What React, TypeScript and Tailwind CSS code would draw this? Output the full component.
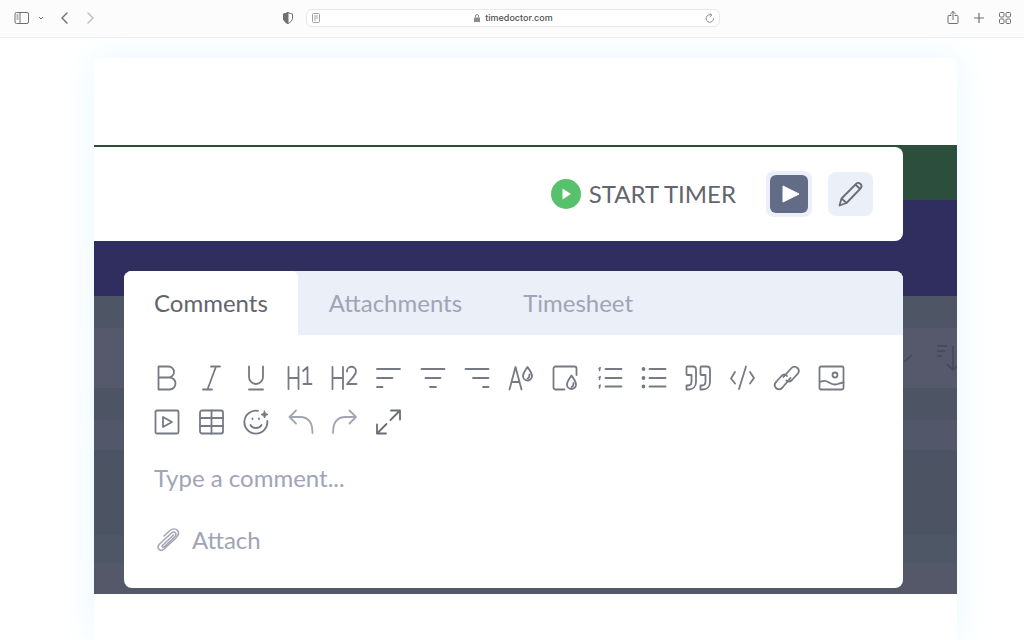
import React, { useState } from "react";

const TABS = ["Comments", "Attachments", "Timesheet"];

/** Shared frame for the editor icons, drawn on a 28px grid */
function Glyph({
  children,
  className = "",
}: {
  children: React.ReactNode;
  className?: string;
}) {
  return (
    <svg
      viewBox="0 0 28 28"
      className={`w-7 h-7 ${className}`}
      fill="none"
      stroke="currentColor"
      strokeWidth="1.8"
      strokeLinecap="round"
      strokeLinejoin="round"
      aria-hidden="true"
    >
      {children}
    </svg>
  );
}

const TOOLS: { label: string; icon: React.ReactNode; className?: string }[] = [
  {
    label: "Bold",
    icon: <path d="M5.5 2.5h10a5.5 5.5 0 0 1 0 11h-10M15.5 13.5h1a6 6 0 0 1 0 12h-11v-23" />,
  },
  {
    label: "Italic",
    icon: <path d="M14 2.5h9M6 25.5h9M19 2.5l-8.5 23" />,
  },
  {
    label: "Underline",
    icon: <path d="M7 2.5V13a7 7 0 0 0 14 0V2.5M7 25.5h14" />,
  },
  {
    label: "Heading 1",
    icon: <path d="M2.5 3v22M12.5 3v22M2.5 14h10M17 7l4.5-4v17M17.500 20h8" />,
  },
  {
    label: "Heading 2",
    icon: <path d="M2.5 3v22M13 3v22M2.5 14H13M17 7.5a4.5 4.500 0 0 1 9-.5c0 3-2 5.500-9 13h9.500" />,
  },
  { label: "Align left", icon: <path d="M3 5h23M3 14h15.5M3 23h5.5" /> },
  { label: "Align center", icon: <path d="M2.5 5h23M6.500 14h15M11 23h6" /> },
  { label: "Align right", icon: <path d="M2.5 5h23M10 14h15.5M20 23h5.5" /> },
  {
    label: "Text color",
    icon: (
      <>
        <path d="M2.5 25.500 8.5 3l6 22.500M4.5 18h8" />
        <path d="M20.5 3c-2.5 4-4.5 6-4.5 9a4.500 4.500 0 0 0 9 0c0-3-2-5-4.500-9z" />
        <path d="M20.5 14.5c1.500-.5 2-2 2-4" />
      </>
    ),
  },
  {
    label: "Background color",
    icon: (
      <>
        <path d="M13.5 25.500h-9a2 2 0 0 1-2-2v-19a2 2 0 0 1 2-2h19a2 2 0 0 1 2 2V11" />
        <path d="M20.5 11.500c-2.5 4-4.5 6-4.5 9a4.500 4.500 0 0 0 9 0c0-3-2-5-4.500-9z" />
        <path d="M20.5 23c1.500-.5 2-2 2-4" />
      </>
    ),
  },
  {
    label: "Numbered list",
    icon: (
      <>
        <path d="M9.5 5h16M9.5 14h16M9.5 22.5h16" />
        <path strokeWidth="1.4" d="m3 4.500 1.200-1-.7 3M3 13.500l1.200-1-.7 3M3 22l1.200-1-.7 3" />
      </>
    ),
  },
  {
    label: "Bulleted list",
    icon: (
      <>
        <path d="M9.5 5h16M9.5 14h16M9.5 22.5h16" />
        <circle cx="3.5" cy="5" r="1" fill="currentColor" />
        <circle cx="3.5" cy="14" r="1" fill="currentColor" />
        <circle cx="3.5" cy="22.5" r="1" fill="currentColor" />
      </>
    ),
  },
  {
    label: "Quote",
    icon: (
      <>
        <path d="M2.5 3.500a1 1 0 0 1 1-1H9a3 3 0 0 1 3 3V18c0 4.500-3 7.500-7.500 7.500h-2v-4H4c2.500 0 3.500-1.500 3.500-4V11h-4a1 1 0 0 1-1-1z" />
        <path d="M16.5 3.500a1 1 0 0 1 1-1H23a3 3 0 0 1 3 3V18c0 4.500-3 7.500-7.500 7.500h-2v-4H18c2.500 0 3.500-1.500 3.500-4V11h-4a1 1 0 0 1-1-1z" />
      </>
    ),
  },
  { label: "Code", icon: <path d="m7 8-4 6.500 4 5M22 8l4 6-4 5.500M18 2.500 11 25" /> },
  {
    label: "Link",
    icon: (
      <>
        <path d="m10.5 13 7.500-8.500c2-2.500 4.500-2.500 6.500-.5s1.500 4.500-.5 6.500L19 16c-2 2-4 2-5.500.5" />
        <path d="m17.5 14-8 9.500c-2 2-4.500 2.500-6.500.5s-1.500-4.500.5-6.500L8.500 12c2-2 4-2 5.500 0" />
      </>
    ),
  },
  {
    label: "Image",
    icon: (
      <>
        <rect x="2.500" y="2.500" width="24" height="23" rx="1.500" />
        <circle cx="18" cy="11" r="2.500" />
        <path d="M3 18c3-1.500 6-1.500 9 .5s6 2.500 9 1.500 4-1.500 5.500-1.500" />
      </>
    ),
  },
  {
    label: "Video",
    icon: (
      <>
        <rect x="2.5" y="2.5" width="23" height="23" rx="1.5" />
        <path d="M10 9v10l9-5z" />
      </>
    ),
  },
  {
    label: "Table",
    icon: (
      <>
        <rect x="3" y="2.5" width="23" height="23" rx="2" />
        <path d="M3 10h23M3 18h23M14.5 2.5v23" />
      </>
    ),
  },
  {
    label: "Emoji",
    icon: (
      <>
        <path d="M16 2.800A11.500 11.500 0 1 0 25.300 13" />
        <path d="M8.5 17c2 4 9 4 11 0M10.500 10.500v.5M17 10.500v.5" />
        <path
          d="m22.500 3 1 2.500 2.500 1-2.500 1-1 2.500-1-2.500-2.500-1 2.500-1z"
          fill="currentColor"
          strokeWidth="1"
        />
      </>
    ),
  },
  {
    label: "Undo",
    className: "text-[#a3a6b2]",
    icon: <path d="M10 2.500 3.500 9l6.500 6.500M3.500 9H14c8 0 12.500 5 12.500 16" />,
  },
  {
    label: "Redo",
    className: "text-[#a3a6b2]",
    icon: <path d="m19.500 2.500 6.500 6.500-6.500 6.500M26 9H15.500C7.500 9 3 14 3 25" />,
  },
  {
    label: "Full screen",
    className: "text-[#6b6d74]",
    icon: <path d="M17 2.500h9v9M26 2.500l-9.500 9.500M12 25.500H3v-9M3 25.500l9.500-9.500" />,
  },
];

function BrowserBar() {
  const [url, setUrl] = useState("timedoctor.com");

  return (
    <header className="relative z-10 h-[38px] shrink-0 flex items-center bg-[#fcfcfc] border-b border-[#edeff0] pl-3.5 pr-3 pb-0.5 text-[#707070]">
      <div className="flex-1 flex items-center">
        <button aria-label="Sidebar">
          <svg viewBox="0 0 16 12" className="w-4 h-3" fill="none" stroke="currentColor">
            <rect x="1" y=".5" width="13.5" height="11" rx="1.5" />
            <path d="M6 .5v11M2.5 3h2M2.5 5h2M2.5 7h2" />
          </svg>
        </button>
        <button aria-label="Tab groups" className="ml-2">
          <svg viewBox="0 0 6 6" className="w-1.5 h-1.5" fill="none" stroke="currentColor">
            <path d="m1 2 2 2 2-2" />
          </svg>
        </button>
        <button aria-label="Back" className="ml-4">
          <svg viewBox="0 0 10 12" className="w-2.5 h-3" fill="none" stroke="currentColor" strokeWidth="1.4" strokeLinecap="round">
            <path d="M7 1 2 6l5 5" />
          </svg>
        </button>
        <button aria-label="Forward" className="ml-4 text-[#bdbdbd]">
          <svg viewBox="0 0 10 12" className="w-2.5 h-3" fill="none" stroke="currentColor" strokeWidth="1.4" strokeLinecap="round">
            <path d="m2 1 5 5-5 5" />
          </svg>
        </button>
        <button aria-label="Privacy report" className="ml-auto mr-3">
          <svg viewBox="0 0 12 12" className="w-3 h-3" fill="none" stroke="currentColor">
            <path d="M6 .5c1.500.8 3 1.200 4.500 1.500v4c0 2.500-2 4.500-4.500 5.500C3.500 10.500 1.500 8.500 1.500 6V2C3 1.700 4.500 1.300 6 .5z" />
            <path d="M6 .5v11C3.500 10.500 1.500 8.500 1.500 6V2C3 1.700 4.500 1.300 6 .5z" fill="currentColor" />
          </svg>
        </button>
      </div>

      <div className="w-[414px] h-[18px] flex items-center rounded-md border border-[#e8e8e8] bg-white px-1">
        <button aria-label="Reader">
          <svg viewBox="0 0 10 10" className="w-2.5 h-2.5" fill="none" stroke="#a0a0a0">
            <rect x="1.500" y=".5" width="7" height="9" rx="1" />
            <path d="M3 3h4M3 5h4M3 7h2" />
          </svg>
        </button>
        <div className="flex-1 flex items-center justify-center gap-1">
          <svg viewBox="0 0 8 10" className="w-2 h-2.5" fill="none" stroke="#8c8c8c">
            <path d="M2.500 4.500V3a1.500 1.500 0 0 1 3 0v1.500" />
            <rect x="1" y="4.500" width="6" height="4.500" rx=".5" fill="#8c8c8c" stroke="none" />
          </svg>
          <input
            aria-label="Address"
            value={url}
            onChange={(e) => setUrl(e.target.value)}
            className="field-sizing-content bg-transparent outline-none font-['Inter',sans-serif] font-medium text-[9px] leading-4 text-[#505050]"
          />
        </div>
        <button aria-label="Reload">
          <svg viewBox="0 0 10 10" className="w-2.5 h-2.5" fill="none" stroke="#909090" strokeLinecap="round">
            <path d="M8.700 5.500A3.800 3.800 0 1 1 6.500 2M5 .5 6.800 2 5 3.800" />
          </svg>
        </button>
      </div>

      <div className="flex-1 flex items-center justify-end gap-3">
        <button aria-label="Share">
          <svg viewBox="0 0 14 16" className="w-3.5 h-4" fill="none" stroke="currentColor" strokeLinecap="round">
            <path d="M5 5.500H3a1 1 0 0 0-1 1v6a1 1 0 0 0 1 1h8a1 1 0 0 0 1-1v-6a1 1 0 0 0-1-1H9M7 9.500v-8M4.500 4 7 1.500 9.500 4" />
          </svg>
        </button>
        <button aria-label="New tab">
          <svg viewBox="0 0 14 14" className="w-3.5 h-3.5" fill="none" stroke="currentColor" strokeWidth="1.2">
            <path d="M7 2v10M2 7h10" />
          </svg>
        </button>
        <button aria-label="Tab overview">
          <svg viewBox="0 0 14 14" className="w-3.5 h-3.5" fill="none" stroke="currentColor">
            <rect x="1.5" y="1.5" width="4.5" height="4.5" rx="1" />
            <rect x="8" y="1.5" width="4.5" height="4.5" rx="1" />
            <rect x="1.5" y="8" width="4.5" height="4.5" rx="1" />
            <rect x="8" y="8" width="4.5" height="4.5" rx="1" />
          </svg>
        </button>
      </div>
    </header>
  );
}

function TimerBar() {
  return (
    <div className="h-[94px] mr-[54px] pr-[30px] flex items-center justify-end rounded-r-lg bg-white">
      <button className="flex items-center gap-2 text-2xl text-[#62656d]">
        <svg viewBox="0 0 30 30" className="w-[30px] h-[30px]" aria-hidden="true">
          <circle cx="15" cy="15" r="15" fill="#57c26b" />
          <path d="M11.5 9.500v11l8.500-5.500z" fill="#fff" />
        </svg>
        START TIMER
      </button>
      <button
        aria-label="Play"
        className="ml-[30px] w-[46px] h-[46px] flex items-center justify-center rounded-lg bg-[#ebeff7]"
      >
        <svg viewBox="0 0 38 38" className="w-[38px] h-[38px]">
          <rect width="38" height="38" rx="6" fill="#626c87" />
          <path d="M13 11v16l16-8z" fill="#fff" stroke="#fff" strokeLinejoin="round" />
        </svg>
      </button>
      <button
        aria-label="Edit"
        className="ml-4 w-[45px] h-[44px] flex items-center justify-center rounded-lg bg-[#ebeff7] text-[#696c76]"
      >
        <Glyph>
          <path d="m2.500 25.500 2-7L19 4c1.500-1.500 3-1.500 4.500 0s1.500 3 0 4.500l-14 14.500zM18.500 4.500l4.500 4.500M4.500 18.500l5 4.500" />
        </Glyph>
      </button>
    </div>
  );
}

function CommentsCard() {
  const [active, setActive] = useState("Comments");
  const [comment, setComment] = useState("");

  return (
    <section className="mt-[30px] ml-[30px] mr-[54px] rounded-lg overflow-hidden bg-white">
      <div role="tablist" className="flex gap-px h-16 bg-[#ebeff7]">
        {TABS.map((tab) => (
          <button
            key={tab}
            role="tab"
            aria-selected={active === tab}
            onClick={() => setActive(tab)}
            className={`px-[30px] text-2xl ${
              active === tab
                ? "bg-white text-[#62656d] rounded-tr-md"
                : "text-[#a0a4b6]"
            }`}
          >
            {tab}
          </button>
        ))}
      </div>

      <div className="pt-[21px] pl-[21px] pr-[50px] grid grid-cols-16 text-[#777a83]">
        {TOOLS.map((tool) => (
          <button
            key={tool.label}
            aria-label={tool.label}
            className={`h-11 flex items-center justify-center ${tool.className ?? ""}`}
          >
            <Glyph>{tool.icon}</Glyph>
          </button>
        ))}
      </div>

      <div className="px-[30px] pt-[18px] pb-8 text-2xl text-[#a0a4b6]">
        <textarea
          aria-label="Comment"
          rows={1}
          value={comment}
          onChange={(e) => setComment(e.target.value)}
          placeholder="Type a comment..."
          className="block w-full resize-none outline-none placeholder:text-[#a0a4b6]"
        />
        <button className="mt-[30px] flex items-center gap-2.5">
          <Glyph>
            <path
              strokeWidth="1.5"
              d="M19.500 9 8.500 19.500c-1 1.500.5 2.500 1.800 1.300L21 10.500c2.500-3-.5-6-3.500-3.500L5.500 18c-3.500 4 .5 8.500 4.500 5L22 12c6-6-.5-12-6-7.500L10 10"
            />
          </Glyph>
          Attach
        </button>
      </div>
    </section>
  );
}

export default function App() {
  return (
    <div className="min-h-screen flex flex-col overflow-hidden bg-white font-['Lato',sans-serif]">
      <BrowserBar />

      <main className="flex-1 flex pt-5 pl-[94px] pr-[67px]">
        <div className="flex-1 pt-[87px] pb-[46px] bg-white rounded-t-lg shadow-[0_0_40px_#e8f6ff]">
          {/* Dimmed app behind the task dialog */}
          <div className="relative pt-0.5 pb-1.5 bg-[linear-gradient(#2b4f3c_55px,#302e5e_55px_151px,#4e5564_151px_183px,#56596b_183px_243px,#4d5464_243px_275px,#525869_275px_305px,#4c5362_305px_390px,#4e5765_390px_418px,#545869_418px)]">
            <svg
              viewBox="0 0 54 40"
              className="absolute right-0 top-[193px] w-[54px] h-10"
              fill="none"
              stroke="#434859"
              strokeWidth="1.5"
              aria-hidden="true"
            >
              <path d="m1 24 8-7M34 8h10M34 13h8M34 18h5M50 8v23M44 26l6 6 4-4" />
            </svg>
            <TimerBar />
            <CommentsCard />
          </div>
        </div>
      </main>
    </div>
  );
}
